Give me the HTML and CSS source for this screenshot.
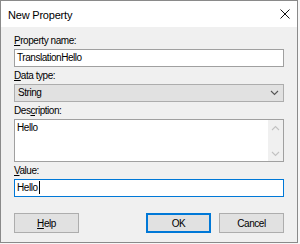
FILE: index.html
```html
<!DOCTYPE html>
<html lang="en">
<head>
  <meta charset="UTF-8" />
  <title>New Property</title>
  <link rel="stylesheet" href="styles.css">
</head>
<body>
  <div class="window">
    <div class="titlebar">
      <span class="title">New Property</span>
      <svg class="close" width="10" height="10" viewBox="0 0 10 10">
        <path d="M0.5 0.5 L9.5 9.5 M9.5 0.5 L0.5 9.5" stroke="#111" stroke-width="1" fill="none" />
      </svg>
    </div>
    <div class="content">
      <label class="lbl"><u>P</u>roperty name:</label>
      <div class="field">TranslationHello</div>

      <label class="lbl"><u>D</u>ata type:</label>
      <div class="field combo">
        <span>String</span>
        <svg width="9" height="6" viewBox="0 0 9 6">
          <path d="M1 1 L4.5 4.5 L8 1" stroke="#555" stroke-width="1.1" fill="none" />
        </svg>
      </div>

      <label class="lbl">Des<u>c</u>ription:</label>
      <div class="field memo">
        <div class="memo-text">Hello</div>
        <div class="scroll">
          <svg width="9" height="6" viewBox="0 0 9 6">
            <path d="M1 5 L4.5 1.5 L8 5" stroke="#c2c2c2" stroke-width="1.1" fill="none" />
          </svg>
          <svg width="9" height="6" viewBox="0 0 9 6">
            <path d="M1 1 L4.5 4.5 L8 1" stroke="#c2c2c2" stroke-width="1.1" fill="none" />
          </svg>
        </div>
      </div>

      <label class="lbl"><u>V</u>alue:</label>
      <div class="field focused">Hello<span class="caret"></span></div>

      <div class="buttons">
        <button class="btn"><u>H</u>elp</button>
        <div class="right">
          <button class="btn default">OK</button>
          <button class="btn">Cancel</button>
        </div>
      </div>
    </div>
  </div>
</body>
</html>
```

FILE: styles.css
```css
body {
  margin: 0;
  background: #f7f7f7;
  font-family: "Liberation Sans", Arial, sans-serif;
  font-size: 10px;
  letter-spacing: -0.45px;
  color: #000;
}

.window {
  width: 296px;
  height: 241px;
  border: 1px solid #8a8a8a;
  background: #f0f0f0;
  display: flex;
  flex-direction: column;
}

.titlebar {
  height: 26px;
  background: #fff;
  display: flex;
  align-items: center;
  justify-content: space-between;
  padding: 0 7px 0 7px;
}

.title {
  font-size: 11px;
  letter-spacing: -0.2px;
  margin-top: 1px;
}

.content {
  padding: 7px 13px 0 13px;
  display: flex;
  flex-direction: column;
}

.lbl {
  display: block;
  height: 13px;
  line-height: 13px;
  margin-bottom: 2px;
}

.field {
  height: 16px;
  line-height: 16px;
  border: 1px solid #a0a0a0;
  background: #fff;
  padding: 0 2px;
  margin-bottom: 2px;
}

.combo {
  background: #e1e1e1;
  border-color: #adadad;
  display: flex;
  align-items: center;
  justify-content: space-between;
  padding: 0 4px 0 3px;
}

.memo {
  height: 41px;
  padding: 0;
  display: flex;
}

.memo-text {
  flex: 1;
  padding: 0 2px;
}

.scroll {
  width: 15px;
  background: #f0f0f0;
  display: flex;
  flex-direction: column;
  justify-content: space-between;
  align-items: center;
  padding: 5px 0 4px 0;
}

.focused {
  border-color: #0078d7;
}

.caret {
  display: inline-block;
  width: 1px;
  height: 13px;
  background: #000;
  margin-left: 1px;
  vertical-align: -3px;
}

.buttons {
  display: flex;
  justify-content: space-between;
  margin-top: 14px;
}

.right {
  display: flex;
  gap: 8px;
}

.btn {
  width: 65px;
  height: 20px;
  padding: 0;
  font-family: "Liberation Sans", Arial, sans-serif;
  font-size: 10px;
  letter-spacing: -0.45px;
  background: #e1e1e1;
  border: 1px solid #adadad;
  color: #000;
}

.default {
  border: 2px solid #0078d7;
}
```
